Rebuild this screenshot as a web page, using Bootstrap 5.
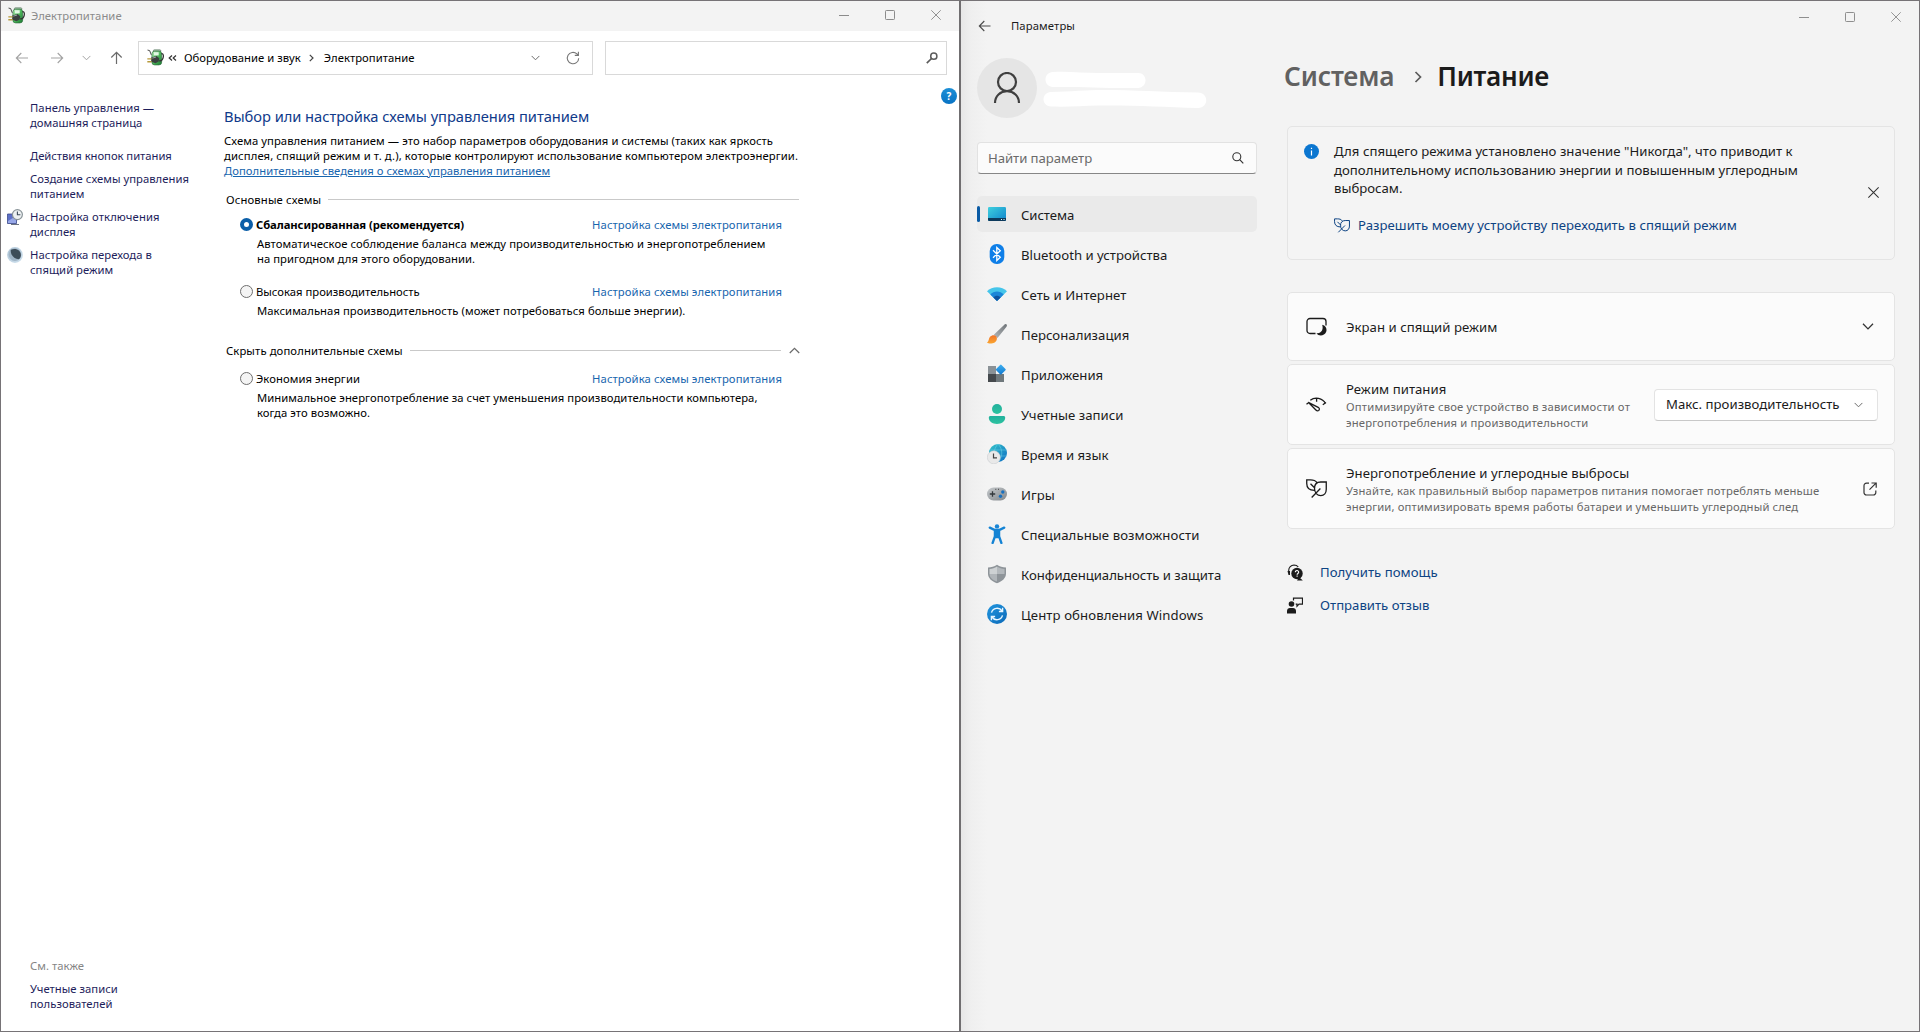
<!DOCTYPE html>
<html lang="ru">
<head>
<meta charset="utf-8">
<meta name="viewport" content="width=device-width, initial-scale=1">
<title>Электропитание</title>
<link href="https://cdn.jsdelivr.net/npm/bootstrap@5.3.0/dist/css/bootstrap.min.css" rel="stylesheet">
<style>
  body { font-family: "Noto Sans", "Open Sans", sans-serif; color: #1b1b1b; background: #f3f3f3; overflow: hidden; }
  svg { display: block; flex: none; }
  a { text-decoration: none; }
  .ls-0 { letter-spacing: 0; }
  .ls-1 { letter-spacing: .03px; }
  .ls-2 { letter-spacing: .07px; }
  .ls-3 { letter-spacing: .11px; }
  .ls-4 { letter-spacing: .15px; }
  .ls-5 { letter-spacing: .19px; }
  .ls-n { letter-spacing: -.04px; }

  /* control panel window */
  .cpl { width: 961px; height: 1032px; background: #fff; border: 1px solid #767376; border-right: 2px solid #706e70; font-size: 11.28px; line-height: 15px; color: #000; }
  .cpl-title { height: 30px; background: #f3f3f3; padding: 0 0 2px 7px; color: #8b8b8b; }
  .win-btn { width: 46px; height: 100%; display: flex; align-items: center; justify-content: center; }
  .cpl-nav { height: 34px; margin-top: 10px; padding: 0 12px 0 14px; }
  .address { width: 455px; border: 1px solid #d9d9d9; padding: 0 12px 1px 8px; margin-left: 15px; }
  .cpl-search { flex: 1; margin-left: 12px; border: 1px solid #d9d9d9; padding-right: 8px; }
  .side { width: 223px; padding: 25px 0 20px 6px; }
  .side a { color: #1d1d5b; display: block; }
  .side .slot { width: 16px; margin-right: 7px; flex: none; }
  .main-col { width: 575px; padding-top: 31px; }
  .main-col h1 { font-size: 14.7px; letter-spacing: -.05px; color: #0f3a8a; line-height: 20px; margin: 0 0 7px; font-weight: 400; }
  .main-col a { color: #1765ae; }
  .rule-line { flex: 1; height: 1px; background: #c9c9c9; margin-left: 7px; }
  .plan { padding: 0 17px 0 16px; }
  .plan-name { height: 15px; }
  .plan-desc { padding-left: 17px; margin-top: 4px; }
  .radio { width: 13px; height: 13px; border-radius: 50%; border: 1px solid #6f6f6f; background: #f4f4f4; margin-right: 3px; flex: none; }
  .radio-on { border: 4px solid #0b5ea8; background: #fff; }
  .help { position: absolute; right: 2px; top: 13px; width: 16px; height: 16px; border-radius: 50%; background: linear-gradient(#1c8fd6,#0873c4); color: #fff; font-weight: 700; font-size: 10px; line-height: 16px; text-align: center; }

  /* settings window */
  .settings { height: 1032px; width: 959px; background: linear-gradient(90deg,#e7e7e7 0,#efefef 10px,#f3f3f3 26px); border: 1px solid #767376; border-left: 0; font-size: 13.16px; }
  .pane { width: 317px; padding-left: 16px; }
  .pane-title { height: 50px; font-size: 11.28px; }
  .avatar { width: 60px; height: 60px; border-radius: 50%; background: #e5e5e5; }
  .find { width: 280px; height: 32px; margin-top: 24px; background: #fbfbfb; border: 1px solid #e2e2e2; border-bottom: 1px solid #868686; border-radius: 4px; padding: 0 12px 0 10px; color: #6a6a6a; }
  .entry { width: 280px; height: 36px; margin-bottom: 4px; padding-left: 10px; border-radius: 5px; position: relative; gap: 14px; }
  .entry-on { background: #eaeaea; }
  .entry-on::before { content: ""; position: absolute; left: 0; top: 10px; width: 3px; height: 16px; border-radius: 2px; background: #0a5ba5; }
  .entry span { padding-top: 4px; }
  .content { width: 642px; padding-right: 25px; padding-left: 9px; }
  .controls { height: 32px; color: #8e8e8e; margin-right: -24px; }
  .crumbs { height: 44px; margin: 22px 0 27px -3px; font-size: 26.2px; font-weight: 600; letter-spacing: -.3px; }
  .panel { background: #fbfbfb; border: 1px solid #e4e4e4; border-radius: 5px; width: 608px; }
  .info { height: 134px; background: #f4f4f4; margin-bottom: 32px; padding: 14px 0 0 16px; line-height: 18.6px; }
  .info-badge { width: 15px; height: 15px; margin-top: 3px; border-radius: 50%; background: #0b76d0; margin-right: 15px; }
  .blue { color: #0d4383; }
  .sub { color: #676767; font-size: 11.28px; line-height: 16px; }
  .opt { padding-left: 18px; padding-right: 16px; margin-bottom: 3px; }
  .opt > .lead-ico { width: 21px; margin-right: 19px; }
  .opt-text { padding-top: 2px; }
  .pick { width: 224px; height: 32px; background: #fff; border: 1px solid #e3e3e3; border-bottom-color: #c8c8c8; border-radius: 4px; padding: 0 14px 0 11px; }
  .footer-link { gap: 17px; height: 23px; }
</style>
</head>
<body>
<svg width="0" height="0" class="position-absolute">
  <defs>
    <linearGradient id="gSys" x1="0" y1="0" x2="1" y2="1"><stop stop-color="#3fd0de"/><stop offset="1" stop-color="#0e84cc"/></linearGradient>
    <linearGradient id="gGrey" x1="0" y1="0" x2="1" y2="1"><stop stop-color="#c5c9cc"/><stop offset="1" stop-color="#82878b"/></linearGradient>
    <linearGradient id="gHandle" x1="1" y1="0" x2="0" y2="1"><stop stop-color="#6e7377"/><stop offset="1" stop-color="#b4b8bb"/></linearGradient>
    <linearGradient id="gOr" x1="0" y1="0" x2="0" y2="1"><stop stop-color="#f0742a"/><stop offset="1" stop-color="#fba62f"/></linearGradient>
    <linearGradient id="gBlue" x1="0" y1="0" x2="1" y2="1"><stop stop-color="#3fb0f0"/><stop offset="1" stop-color="#0f78d0"/></linearGradient>
    <linearGradient id="gUpd" x1="0" y1="0" x2="1" y2="1"><stop stop-color="#2196df"/><stop offset="1" stop-color="#0c69b8"/></linearGradient>
    <linearGradient id="gTeal" x1="0" y1="0" x2="0" y2="1"><stop stop-color="#22b09c"/><stop offset="1" stop-color="#2ec3a0"/></linearGradient>
    <linearGradient id="gGlobe" x1="0" y1="0" x2="1" y2="1"><stop stop-color="#35c4c9"/><stop offset="1" stop-color="#0f6fc4"/></linearGradient>
    <linearGradient id="gGreen" x1="0" y1="0" x2="1" y2="1"><stop stop-color="#b8eeb9"/><stop offset=".5" stop-color="#4cb65a"/><stop offset="1" stop-color="#1d7a34"/></linearGradient>
    <radialGradient id="gMoon" cx=".4" cy=".4" r=".6"><stop stop-color="#9eb6c9"/><stop offset="1" stop-color="#c9dcea"/></radialGradient>
    <!-- battery with plug -->
    <symbol id="power" viewBox="0 0 16 16">
      <rect x="6" y="0.8" width="7" height="2" rx=".8" fill="#a8c9ae" stroke="#52705a" stroke-width=".6"/>
      <rect x="4.6" y="2" width="9.2" height="13" rx="2.6" fill="url(#gGreen)" stroke="#2b6b3b" stroke-width=".6"/>
      <path d="M6.5 3h4.5v3H6.500z" fill="#e2f7e4"/>
      <path d="M13.500 4.500c2-.5 2.200 2 1.600 4s-2 3-3.600 2.500" fill="none" stroke="#333" stroke-width="1.200"/>
      <path d="M.5 1l2 .5 1.500 4" fill="none" stroke="#444" stroke-width=".9"/>
      <path d="M4 8l5-1.500 2.500 2.300-.5 3-3 1.700-4-1.500z" fill="#3b4040"/>
      <path d="M5 8.600l3.500-1" stroke="#a9b0b0" stroke-width=".8"/>
      <path d="M.3 9.300h4M.3 12h4" stroke="#b79a3c" stroke-width="1.300"/>
    </symbol>
    <symbol id="w-min" viewBox="0 0 10 10"><path d="M0 5.500h10" stroke="currentColor"/></symbol>
    <symbol id="w-max" viewBox="0 0 10 10"><rect x=".5" y=".5" width="9" height="9" rx=".8" fill="none" stroke="currentColor"/></symbol>
    <symbol id="w-close" viewBox="0 0 10 10"><path d="M.3.3l9.400 9.400M9.700.3L.3 9.700" stroke="currentColor" stroke-width=".95"/></symbol>
    <symbol id="chev" viewBox="0 0 10 6"><path d="M.7.7L5 5 9.300.7" fill="none" stroke="currentColor" stroke-width="1.100"/></symbol>
    <symbol id="leaf" viewBox="0 0 20 18"><path d="M10.300 3.200C9 1.200 6.800.7 4.300.7H.7v3.600c0 4 2.600 6.500 7.300 6.500M19.300 2.800H14c-3.500 0-5.900 2.300-5.900 6 0 4.100 2.500 6.900 6 6.900 3.200 0 5.200-2.500 5.200-6zM5.400 17.500L13.700 9M4.300 4.400l4.300 4.300" fill="none" stroke="currentColor" stroke-width="1.250"/></symbol>
  </defs>
</svg>

<div class="d-flex">
  <section class="cpl d-flex flex-column flex-shrink-0">
    <header class="cpl-title d-flex align-items-center flex-shrink-0">
      <svg width="17" height="17"><use href="#power"/></svg>
      <span class="ls-1 me-auto" style="margin-left:6px">Электропитание</span>
      <span class="win-btn"><svg width="10" height="10"><use href="#w-min"/></svg></span>
      <span class="win-btn"><svg width="10" height="10"><use href="#w-max"/></svg></span>
      <span class="win-btn"><svg width="10" height="10"><use href="#w-close"/></svg></span>
    </header>

    <div class="cpl-nav d-flex flex-shrink-0 align-items-stretch">
      <div class="d-flex align-items-center">
        <svg width="14" height="12" viewBox="0 0 14 12"><path d="M13 6H1.500M6.300 1L1.300 6l5 5" fill="none" stroke="#a3a3a3" stroke-width="1.100"/></svg>
        <svg style="margin:0 17px 0 22px" width="14" height="12" viewBox="0 0 14 12"><path d="M0 6h11.500M6.700 1l5 5-5 5" fill="none" stroke="#a3a3a3" stroke-width="1.100"/></svg>
        <svg width="9" height="6" style="color:#a3a3a3"><use href="#chev"/></svg>
        <svg style="margin-left:18px" width="14" height="14" viewBox="0 0 14 14"><path d="M7.500 13V1.500M2.300 6.500l5.200-5.200 5.200 5.200" fill="none" stroke="#6b6b6b" stroke-width="1.200"/></svg>
      </div>
      <div class="address d-flex align-items-center">
        <svg width="17" height="17"><use href="#power"/></svg>
        <svg class="ms-1" width="9" height="6" viewBox="0 0 9 6"><path d="M4 .5L1.200 3 4 5.500M8 .5L5.200 3 8 5.500" fill="none" stroke="#333" stroke-width="1.200"/></svg>
        <span class="ls-1" style="margin-left:7px">Оборудование и звук</span>
        <svg style="margin:0 10px 0 8px" width="5" height="8" viewBox="0 0 5 8"><path d="M.8.8L4 4 .8 7.200" fill="none" stroke="#444" stroke-width="1.200"/></svg>
        <span class="ls-1 me-auto">Электропитание</span>
        <svg width="9" height="6" style="color:#6b6b6b"><use href="#chev"/></svg>
        <svg style="margin-left:26px" width="14" height="14" viewBox="0 0 14 14"><path d="M12.700 7.200a5.700 5.700 0 1 1-1.800-4.300l1.300 1.300M12.400.8v3.600H8.800" fill="none" stroke="#767676" stroke-width="1.100"/></svg>
      </div>
      <div class="cpl-search d-flex align-items-center justify-content-end">
        <svg width="12" height="12" viewBox="0 0 12 12"><circle cx="7.800" cy="4.200" r="3.100" fill="none" stroke="#5c5c5c" stroke-width="1.500"/><path d="M5.500 6.500L.8 11.200" stroke="#5c5c5c" stroke-width="1.700"/></svg>
      </div>
    </div>

    <div class="d-flex flex-grow-1 position-relative">
      <nav class="side d-flex flex-column ls-1 text-nowrap">
        <div class="d-flex mb-3"><span class="slot"></span><a href="#"><span class="ls-2">Панель управления —</span><br><span class="ls-0">домашняя страница</span></a></div>
        <div class="d-flex mb-2" style="margin-top:2px"><span class="slot"></span><a href="#" class="ls-n">Действия кнопок питания</a></div>
        <div class="d-flex mb-2"><span class="slot"></span><a href="#">Создание схемы управления<br>питанием</a></div>
        <div class="d-flex mb-2">
          <svg class="slot" height="16" viewBox="0 0 16 16"><path d="M.5 5h9v9.500h-9z" fill="#5d70c8" stroke="#3b4a8c" stroke-width=".8"/><path d="M1 12l8-5v7H1z" fill="#98a8e8"/><path d="M4 15.500h8" stroke="#6d7480"/><circle cx="10.400" cy="5.600" r="5" fill="#edf1f2" stroke="#8a9499" stroke-width="1.200"/><path d="M10.400 2.500v3.300h3" fill="none" stroke="#3c4a5a" stroke-width="1.100"/></svg>
          <a href="#"><span class="ls-3">Настройка отключения</span><br>дисплея</a>
        </div>
        <div class="d-flex">
          <svg class="slot" height="16" viewBox="0 0 16 16"><circle cx="8" cy="8" r="7.900" fill="url(#gMoon)"/><circle cx="8" cy="7.600" r="6.300" fill="#9fb3c4"/><path d="M3.800 2.800c5-2.200 9.800.3 10.100 5 .1 2-.8 3.600-2 4.400C7 12 3.300 8 3.800 2.800z" fill="#3d4c57"/></svg>
          <a href="#">Настройка перехода в<br>спящий режим</a>
        </div>
        <div class="mt-auto" style="padding-left:23px">
          <div class="mb-2" style="color:#858585">См. также</div>
          <a href="#">Учетные записи<br>пользователей</a>
        </div>
      </nav>

      <main class="main-col text-nowrap ls-2">
        <h1>Выбор или настройка схемы управления питанием</h1>
        <div><span class="ls-2">Схема управления питанием — это набор параметров оборудования и системы (таких как яркость</span><br><span class="ls-3">дисплея, спящий режим и т. д.), которые контролируют использование компьютером электроэнергии.</span><br><a href="#" class="text-decoration-underline ls-1">Дополнительные сведения о схемах управления питанием</a></div>

        <div class="d-flex align-items-center" style="margin:14px 0 10px 2px"><span class="ls-4">Основные схемы</span><span class="rule-line"></span></div>

        <div class="plan">
          <div class="plan-name d-flex align-items-center"><span class="radio radio-on"></span><b class="me-auto" style="letter-spacing:-.09px">Сбалансированная (рекомендуется)</b><a href="#" style="letter-spacing:.09px">Настройка схемы электропитания</a></div>
          <div class="plan-desc" style="letter-spacing:.08px">Автоматическое соблюдение баланса между производительностью и энергопотреблением<br><span class="ls-1">на пригодном для этого оборудовании.</span></div>
        </div>
        <div class="plan" style="margin-top:18px">
          <div class="plan-name d-flex align-items-center"><span class="radio"></span><span class="me-auto ls-0">Высокая производительность</span><a href="#" style="letter-spacing:.09px">Настройка схемы электропитания</a></div>
          <div class="plan-desc">Максимальная производительность (может потребоваться больше энергии).</div>
        </div>

        <div class="d-flex align-items-center" style="margin:25px -1px 13px 2px"><span class="ls-3">Скрыть дополнительные схемы</span><span class="rule-line me-2"></span><svg width="11" height="7" style="color:#6b6b6b;transform:rotate(180deg)"><use href="#chev"/></svg></div>

        <div class="plan">
          <div class="plan-name d-flex align-items-center"><span class="radio"></span><span class="me-auto">Экономия энергии</span><a href="#" style="letter-spacing:.09px">Настройка схемы электропитания</a></div>
          <div class="plan-desc" style="letter-spacing:.06px">Минимальное энергопотребление за счет уменьшения производительности компьютера,<br>когда это возможно.</div>
        </div>
      </main>
      <span class="help">?</span>
    </div>
  </section>

  <section class="settings d-flex flex-shrink-0 text-nowrap">
    <aside class="pane flex-shrink-0">
      <div class="pane-title d-flex align-items-center">
        <svg style="margin-left:1px;margin-right:20px" width="13" height="12" viewBox="0 0 13 12"><path d="M12.500 6H1.500M6.300 1L1.300 6l5 5" fill="none" stroke="#4a4a4a" stroke-width="1.100"/></svg>
        <span class="ls-3">Параметры</span>
      </div>
      <div class="d-flex align-items-center" style="padding-top:7px">
        <div class="avatar d-flex align-items-center justify-content-center">
          <svg width="28" height="32" viewBox="0 0 28 32"><circle cx="14" cy="10" r="9" fill="none" stroke="#3f3f3f" stroke-width="2.200"/><path d="M2 31c0-7 5.400-11.800 12-11.800S26 24 26 31" fill="none" stroke="#3f3f3f" stroke-width="2.200"/></svg>
        </div>
        <!-- painted-over account name and e-mail -->
        <svg style="margin:3px 0 0 6px" width="164" height="38" viewBox="0 0 164 38"><path d="M10 1c15-1 30 1 45 1h40c10 0 10 14.500 0 15-30 .5-60-1.500-85-1C0 15.500 0 1.500 10 1zM8 21c20-.5 36-2 52-2 30 0 60 2 95 2.500 11 .5 11 15 0 15.500-35-1-65-3-100-2.500-16 .5-30 1.500-47 1-10-.5-10-14 0-14.500z" fill="#fff"/></svg>
      </div>
      <div class="find d-flex align-items-center justify-content-between"><span style="letter-spacing:-.06px;padding-top:2px">Найти параметр</span>
        <svg width="12" height="12" viewBox="0 0 12 12"><circle cx="4.800" cy="4.800" r="4" fill="none" stroke="#333" stroke-width="1.100"/><path d="M7.700 7.700l3.600 3.600" stroke="#333" stroke-width="1.200"/></svg>
      </div>
      <nav style="margin-top:22px">
        <div class="entry entry-on d-flex align-items-center"><svg width="20" height="20" viewBox="0 0 20 20"><rect x="1" y="3" width="18" height="14" rx="1.200" fill="url(#gSys)"/><path d="M1 14h18v1.800a1.200 1.200 0 0 1-1.200 1.200H2.200A1.200 1.200 0 0 1 1 15.800z" fill="#0d3a5c"/><path d="M14 15.500h1M16.500 15.500h1" stroke="#dff" stroke-width="1"/></svg><span style="letter-spacing:-.08px">Система</span></div>
        <div class="entry d-flex align-items-center"><svg width="20" height="20" viewBox="0 0 20 20"><rect x="2.700" y="0" width="14.600" height="20" rx="7" fill="#0f7fe8"/><path d="M6 6.300l7.300 7-3.500 3.200V3.500l3.500 3.200-7.300 7" fill="none" stroke="#fff" stroke-width="1.300"/></svg><span>Bluetooth и устройства</span></div>
        <div class="entry d-flex align-items-center"><svg width="20" height="20" viewBox="0 0 20 20"><path d="M0 7.300C5 1.900 15 1.900 20 7.300L10 17z" fill="#45c5ea"/><path d="M3.300 10.500c3.400-3.900 10-3.900 13.400 0L10 17z" fill="#1b86d8"/><path d="M6.400 13.500c2-2.200 5.200-2.200 7.200 0L10 17z" fill="#0d53a0"/></svg><span class="ls-2">Сеть и Интернет</span></div>
        <div class="entry d-flex align-items-center"><svg width="20" height="20" viewBox="0 0 20 20"><path d="M19.500.4c.8.800.4 1.800-.2 2.700L10.500 14 6.800 10.800 16.800 1.200c.9-.8 2-1.500 2.700-.8z" fill="url(#gHandle)"/><path d="M3 12.800c2-2.300 5.600-2 6.600.2 1.100 2.700-.8 5.600-4 6.300-2 .5-4.200.5-5.600-.8 2-1 1.500-3.700 3-5.700z" fill="url(#gOr)"/></svg><span class="ls-1">Персонализация</span></div>
        <div class="entry d-flex align-items-center"><svg width="20" height="20" viewBox="0 0 20 20"><path d="M1 2h8v8H1z" fill="#8a9196"/><path d="M1 10h8v8H1z" fill="#45494d"/><path d="M9 10h8v8H9z" fill="#6f787c"/><rect x="10" y="1.800" width="7.600" height="7.600" rx="1" transform="rotate(45 13.800 5.600)" fill="url(#gBlue)"/></svg><span class="ls-1">Приложения</span></div>
        <div class="entry d-flex align-items-center"><svg width="20" height="20" viewBox="0 0 20 20"><circle cx="10" cy="5" r="5" fill="url(#gTeal)"/><path d="M3.500 12h13c1 0 1.700.7 1.700 1.600 0 4-3.700 6.400-8.200 6.400s-8.200-2.400-8.200-6.400c0-.9.700-1.600 1.700-1.600z" fill="url(#gTeal)"/></svg><span class="ls-1">Учетные записи</span></div>
        <div class="entry d-flex align-items-center"><svg width="20" height="20" viewBox="0 0 20 20"><circle cx="11" cy="9" r="9" fill="url(#gGlobe)"/><path d="M3 6h17M3 12h17M11 0c-5 5-5 13 0 18M11 0c5 5 5 13 0 18" fill="none" stroke="#7fe0f0" stroke-width=".6" opacity=".7"/><circle cx="6.800" cy="13.300" r="6.500" fill="#e9e9e9" stroke="#c5c9cc" stroke-width=".5"/><path d="M6.500 9.500v4.300h3.500" fill="none" stroke="#444" stroke-width="1.200"/></svg><span>Время и язык</span></div>
        <div class="entry d-flex align-items-center"><svg width="20" height="20" viewBox="0 0 20 20"><rect x="0" y="3.500" width="20" height="13" rx="6.500" fill="url(#gGrey)"/><path d="M2.800 10h5.400M5.500 7.300v5.400" stroke="#33383c" stroke-width="1.300"/><circle cx="15.800" cy="8" r="1.700" fill="#1770c0"/><circle cx="13.500" cy="12.200" r="1.700" fill="#1770c0"/><path d="M8.300 5.300h1M11 5.300h1" stroke="#444"/></svg><span>Игры</span></div>
        <div class="entry d-flex align-items-center"><svg width="20" height="20" viewBox="0 0 20 20"><circle cx="10" cy="2.400" r="2.200" fill="#1a86d6"/><path d="M2.800 3.600l5 2.400h4.400l5-2.400M10 6v6M7.900 6.500v6L5.600 19M12.100 6.500v6l2.300 6.500M9 7h2v6H9z" fill="none" stroke="#1483d4" stroke-width="2.300" stroke-linecap="round"/></svg><span class="ls-2">Специальные возможности</span></div>
        <div class="entry d-flex align-items-center"><svg width="20" height="20" viewBox="0 0 20 20"><path d="M10 .8c2.700 2 5.600 2.700 9 2.800v6c0 4.600-3.700 7.900-9 9.600-5.300-1.700-9-5-9-9.600v-6c3.400-.1 6.300-.8 9-2.800z" fill="#8e9499"/><path d="M10 2.500c2.400 1.600 4.700 2.200 7.500 2.400V10H10z" fill="#b3b8bc"/><path d="M10 2.500C7.600 4.100 5.300 4.700 2.500 4.900V10H10z" fill="#cdd1d3"/><path d="M2.500 10H10v7.600C5.500 16 2.600 13.500 2.500 10z" fill="#b0b5b9"/></svg><span class="ls-n">Конфиденциальность и защита</span></div>
        <div class="entry d-flex align-items-center"><svg width="20" height="20" viewBox="0 0 20 20"><circle cx="10" cy="10" r="10" fill="url(#gUpd)"/><path d="M4.500 8.700A5.800 5.800 0 0 1 15 7M15.500 11.300A5.800 5.800 0 0 1 5 13M15.600 3.800v3.700h-3.700M4.400 16.200v-3.700h3.700" fill="none" stroke="#e8f6ff" stroke-width="1.400"/></svg><span style="letter-spacing:.1px">Центр обновления Windows</span></div>
      </nav>
    </aside>

    <div class="content d-flex flex-column">
      <div class="controls d-flex justify-content-end flex-shrink-0">
        <span class="win-btn"><svg width="10" height="10"><use href="#w-min"/></svg></span>
        <span class="win-btn"><svg width="10" height="10"><use href="#w-max"/></svg></span>
        <span class="win-btn"><svg width="10" height="10"><use href="#w-close"/></svg></span>
      </div>
      <div class="crumbs d-flex align-items-center"><span style="color:#616161;letter-spacing:-.15px">Система</span><svg style="margin:0 15px 0 20px" width="8" height="12" viewBox="0 0 8 12"><path d="M1.500 1l5 5-5 5" fill="none" stroke="#5a5a5a" stroke-width="1.700"/></svg><span>Питание</span></div>

      <div class="panel info d-flex flex-shrink-0">
        <svg class="info-badge" viewBox="0 0 15 15"><path d="M7.500 6.500v5M7.500 3.700v1.400" stroke="#fff" stroke-width="1.200"/></svg>
        <div style="padding-top:1px">
          <span style="letter-spacing:.045px">Для спящего режима установлено значение "Никогда", что приводит к</span><br><span class="ls-1">дополнительному использованию энергии и повышенным углеродным</span><br>выбросам.
          <div class="blue d-flex align-items-center" style="margin-top:18px;gap:8px;letter-spacing:.045px"><svg width="16" height="15"><use href="#leaf"/></svg>Разрешить моему устройству переходить в спящий режим</div>
        </div>
        <svg class="ms-auto" style="margin:46px 15px 0 0" width="11" height="11" color="#333"><use href="#w-close"/></svg>
      </div>

      <div class="panel opt d-flex align-items-center flex-shrink-0" style="height:69px">
        <svg class="lead-ico" height="20" viewBox="0 0 21 20"><path d="M9.500 16.500H4A3 3 0 0 1 1 13.500v-9a3 3 0 0 1 3-3h13a3 3 0 0 1 3 3v4" fill="none" stroke="#1b1b1b" stroke-width="1.300"/><path d="M16.200 7.700c4 1 5 4.600 3.900 7.400-1.500 3.800-7.300 4.800-9.600 1.200 4.700 0 7.200-3.500 5.700-8.600z" fill="#1b1b1b"/></svg>
        <span class="ls-1 me-auto opt-text">Экран и спящий режим</span>
        <svg class="me-1" style="margin-right:2px" width="12" height="7" color="#333"><use href="#chev"/></svg>
      </div>
      <div class="panel opt d-flex align-items-center flex-shrink-0" style="height:81px">
        <svg class="lead-ico" height="20" viewBox="0 0 21 20"><path d="M4.300 5.200C9 1.600 16.500 2.800 19.600 8.600M10.600 3.200v3.600M20 7.500l-3.200 2.300M.5 9.300l2-1.600M2.300 7.300l9.900 5c1.400.8 1.500 2.500.5 3.200-.9.600-2 .3-2.800-.5z" fill="none" stroke="#1b1b1b" stroke-width="1.300"/></svg>
        <div class="me-auto opt-text"><span class="d-block ls-1" style="line-height:19px">Режим питания</span><div class="sub"><span class="ls-5">Оптимизируйте свое устройство в зависимости от</span><br><span class="ls-4">энергопотребления и производительности</span></div></div>
        <div class="pick d-flex align-items-center justify-content-between ls-1"><span style="padding-top:1px">Макс. производительность</span><svg width="9" height="6" color="#6b6b6b"><use href="#chev"/></svg></div>
      </div>
      <div class="panel opt d-flex align-items-center flex-shrink-0" style="height:81px">
        <svg class="lead-ico" height="19" color="#1b1b1b"><use href="#leaf" width="21" height="19"/></svg>
        <div class="me-auto opt-text"><span class="d-block ls-2" style="line-height:19px">Энергопотребление и углеродные выбросы</span><div class="sub ls-4">Узнайте, как правильный выбор параметров питания помогает потреблять меньше<br>энергии, оптимизировать время работы батареи и уменьшить углеродный след</div></div>
        <svg style="margin-right:1px" width="14" height="14" viewBox="0 0 14 14"><path d="M6 1.200H3.500A2.500 2.500 0 0 0 1 3.700v6.800A2.500 2.500 0 0 0 3.500 13h6.800a2.500 2.500 0 0 0 2.500-2.500V8.500M8.500 1h4.700v4.700M13 1.200L6.500 7.700" fill="none" stroke="#333" stroke-width="1.200"/></svg>
      </div>

      <div class="footer-link d-flex align-items-center blue" style="margin-top:29px"><svg width="16" height="17" viewBox="0 0 16 17"><path d="M1.700 9V6.500A5.500 5.500 0 0 1 7 1c2 0 3.400.8 4.300 2" fill="none" stroke="#1b1b1b" stroke-width="1.100"/><path d="M.5 7h2.500v4H1.500z" fill="#1b1b1b"/><circle cx="10" cy="9.500" r="5.700" fill="#1b1b1b"/><path d="M12 13l3.800 3.500H10z" fill="#1b1b1b"/><path d="M8.300 8.300c0-2.400 3.500-2.200 3.400 0 0 1.200-1.600 1.200-1.600 2.500M10.100 11.600v1.100" fill="none" stroke="#fff" stroke-width="1.100"/></svg><span class="ls-1">Получить помощь</span></div>
      <div class="footer-link d-flex align-items-center blue" style="margin-top:10px"><svg width="16" height="17" viewBox="0 0 16 17"><circle cx="4.500" cy="7" r="2.800" fill="#1b1b1b"/><path d="M0 16.500V14c0-2 1.300-3 3-3h3c1.700 0 3 1 3 3v2.500z" fill="#1b1b1b"/><path d="M6.500 3.500v-2.300h9v6H12l-2 2V7.200H8.700" fill="none" stroke="#1b1b1b" stroke-width="1.200"/></svg><span>Отправить отзыв</span></div>
    </div>
  </section>
</div>
<script src="https://cdn.jsdelivr.net/npm/bootstrap@5.3.0/dist/js/bootstrap.bundle.min.js"></script>
</body>
</html>
